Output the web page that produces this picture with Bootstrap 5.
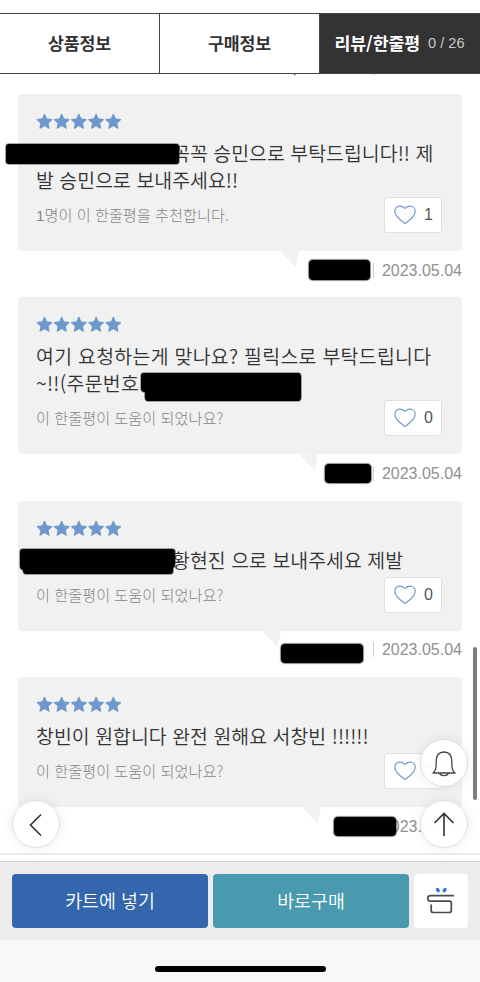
<!DOCTYPE html>
<html lang="ko">
<head>
<meta charset="utf-8">
<meta name="viewport" content="width=device-width, initial-scale=1">
<title>리뷰/한줄평</title>
<link href="https://cdn.jsdelivr.net/npm/bootstrap@5.3.0/dist/css/bootstrap.min.css" rel="stylesheet">
<style>
body{font-family:"Noto Sans CJK KR",sans-serif;color:#333;background:#fff;height:982px}
.screen{height:982px;width:480px}
.tabs{height:61px;margin-top:13px;border-top:1px solid #444;border-bottom:1px solid #444;flex:none;position:relative;z-index:2;background:#fff}
.tab-item{width:160px;font-size:17.3px;font-weight:700;letter-spacing:-.1px;border-right:1px solid #444;color:#333;text-decoration:none;line-height:24px;padding-bottom:2px}
.tab-item.on{background:#333;color:#fff;border-color:#333}
.num{font-family:"Liberation Sans",sans-serif}
.tab-count{font-size:14.6px;font-weight:400;color:#c8c8c8;margin-left:8px;letter-spacing:0;padding-top:1px}
.reviews{height:779px;padding:20px 18px 0;flex:none;overflow:hidden;background:#fff}
.bubble{background:#f1f1f1;border-radius:4px;padding:19px 18px 0;height:157px}
.bubble.short{height:130px}
.stars{display:block;margin-bottom:9px}
.msg{font-size:19.4px;font-weight:350;line-height:27px;height:54px;white-space:nowrap;letter-spacing:.05px}
.msg.wide{letter-spacing:.31px}
.short .msg{height:27px}
.gap-a{display:inline-block;width:136px}
.help{height:36px;margin-top:4px}
.help-text{font-size:15.2px;font-weight:300;color:#848484;letter-spacing:0;line-height:24px;padding-top:5px}
.like{width:58px;height:36px;background:#fff;border:1px solid #dcdfe3;border-radius:3px;padding:0 8px 0 9px;margin-right:2px;font-size:16px;color:#555}
.meta{height:46.4px;padding-bottom:8px;font-size:16px;color:#8f8f8f}
.meta .num{border-left:1px solid #d0d0d0;line-height:15px;padding-left:8px}
.tail{left:var(--x);top:100%;width:19px;height:16px;background:#f1f1f1;clip-path:polygon(0 0,100% 0,82% 100%)}
.ink{background:#000;border-radius:4px;box-shadow:0 0 1px 1px rgba(0,0,0,.45)}
.round-btn{width:48px;height:48px;border-radius:50%;background:rgba(255,255,255,.97);border:1px solid #ddd;box-shadow:0 0 12px rgba(0,0,0,.08);z-index:3;padding:0}
.sep{height:8px;border-top:2px solid #ececec;flex:none;background:#fff}
.buybar{height:79px;background:#ececec;border-top:1px solid #ccc;padding:12px;flex:none}
.buy{height:54px;width:196px;border-radius:4px;color:#fff;font-size:18.4px;font-weight:350;border:0}
.cart{background:#3366ac}
.now{background:#4a9aaf;margin-left:5px}
.gift{width:54px;height:54px;background:#fff;border-radius:4px;border:0;margin-left:5px;padding:0}
.homebar{background:#f8f8f8;flex:1;padding-top:26px}
.homebar span{width:171px;height:6px;border-radius:3px;background:#000}
.scroll-thumb{left:473px;top:647px;width:4px;height:153px;border-radius:2px;background:#7d7d7d}
</style>
<script src="https://cdn.jsdelivr.net/npm/bootstrap@5.3.0/dist/js/bootstrap.bundle.min.js"></script>
</head>
<body>
<svg class="d-none" xmlns="http://www.w3.org/2000/svg">
<symbol id="star" viewBox="0 0 17 17"><path d="M8.500 1.200l2.100 4.700 5.200.6-3.800 3.500 1 5.200-4.500-2.600L4 15.200 5 10 1.200 6.500l5.200-.6z" fill="#6e98cc" stroke="#6e98cc" stroke-width="1.100" stroke-linejoin="round"/></symbol>
<symbol id="stars5" viewBox="0 0 86 17"><use href="#star" width="17" height="17"/><use href="#star" x="17.200" width="17" height="17"/><use href="#star" x="34.400" width="17" height="17"/><use href="#star" x="51.600" width="17" height="17"/><use href="#star" x="68.800" width="17" height="17"/></symbol>
<symbol id="heart" viewBox="0 0 22 20"><path d="M11 18.500C6.500 15.200.8 11.500.8 6.200.8 3.200 3 1.200 5.700 1.200c2.500 0 4.200 1.200 5.300 2.200 1.100-1 2.800-2.200 5.300-2.200 2.700 0 4.900 2 4.900 5 0 5.300-5.700 9-10.200 12.300z" fill="none" stroke="#7298c8" stroke-width="1.200"/></symbol>
</svg>
<div class="screen d-flex flex-column overflow-hidden position-relative">
  <nav class="tabs d-flex">
    <a class="tab-item d-flex align-items-center justify-content-center">상품정보</a>
    <a class="tab-item d-flex align-items-center justify-content-center">구매정보</a>
    <a class="tab-item on d-flex align-items-center justify-content-center">리뷰/한줄평<span class="num tab-count">0 / 26</span></a>
  </nav>
  <main class="reviews">
    <article>
      <div class="bubble position-relative">
        <svg class="stars" width="86" height="17"><use href="#stars5"/></svg>
        <div class="msg"><span class="gap-a"></span>꼭꼭 승민으로 부탁드립니다!! 제<br>발 승민으로 보내주세요!!</div>
        <div class="help d-flex justify-content-between"><span class="help-text"><span class="num">1</span>명이 이 한줄평을 추천합니다.</span><button class="like d-flex align-items-center justify-content-between"><svg width="22" height="20"><use href="#heart"/></svg><span class="num">1</span></button></div>
        <i class="tail position-absolute" style="--x:262px"></i>
      </div>
      <div class="meta d-flex align-items-center justify-content-end"><span class="ink" style="width:61px;height:20px;margin-right:3px"></span><span class="num">2023.05.04</span></div>
    </article>
    <article>
      <div class="bubble position-relative">
        <svg class="stars" width="86" height="17"><use href="#stars5"/></svg>
        <div class="msg wide">여기 요청하는게 맞나요? 필릭스로 부탁드립니다<br>~!!(주문번호</div>
        <div class="help d-flex justify-content-between"><span class="help-text">이 한줄평이 도움이 되었나요?</span><button class="like d-flex align-items-center justify-content-between"><svg width="22" height="20"><use href="#heart"/></svg><span class="num">0</span></button></div>
        <i class="tail position-absolute" style="--x:281px"></i>
      </div>
      <div class="meta d-flex align-items-center justify-content-end"><span class="ink" style="width:46px;height:19px;margin-right:2px"></span><span class="num">2023.05.04</span></div>
    </article>
    <article>
      <div class="bubble short position-relative">
        <svg class="stars" width="86" height="17"><use href="#stars5"/></svg>
        <div class="msg"><span class="gap-a"></span>황현진 으로 보내주세요 제발</div>
        <div class="help d-flex justify-content-between"><span class="help-text">이 한줄평이 도움이 되었나요?</span><button class="like d-flex align-items-center justify-content-between"><svg width="22" height="20"><use href="#heart"/></svg><span class="num">0</span></button></div>
        <i class="tail position-absolute" style="--x:244px"></i>
      </div>
      <div class="meta d-flex align-items-center justify-content-end"><span class="ink mt-2" style="width:82px;height:19px;margin-right:10px"></span><span class="num">2023.05.04</span></div>
    </article>
    <article>
      <div class="bubble short position-relative">
        <svg class="stars" width="86" height="17"><use href="#stars5"/></svg>
        <div class="msg">창빈이 원합니다 완전 원해요 서창빈 !!!!!!</div>
        <div class="help d-flex justify-content-between"><span class="help-text">이 한줄평이 도움이 되었나요?</span><button class="like d-flex align-items-center justify-content-between"><svg width="22" height="20"><use href="#heart"/></svg><span class="num">0</span></button></div>
        <i class="tail position-absolute" style="--x:284px"></i>
      </div>
      <div class="meta d-flex align-items-center justify-content-end"><span class="ink position-relative" style="width:62px;height:19px;margin-right:-23px"></span><span class="num">2023.05.04</span></div>
    </article>
  </main>
  <div class="sep"></div>
  <div class="buybar d-flex">
    <button class="buy cart">카트에 넣기</button>
    <button class="buy now">바로구매</button>
    <button class="gift d-flex align-items-center justify-content-center" aria-label="선물하기"><svg width="54" height="54" viewBox="0 0 54 54" fill="none"><path d="M40 21.700H16.500a2.700 2.700 0 0 0 0 5.400h18.800a2 2 0 0 1 2 2v7.400a2 2 0 0 1-2 2H19.200a2 2 0 0 1-2-2v-6" stroke="#4b4b50" stroke-width="1.700"/><path d="M23.500 15.500l.7 1.200M31 15.500l-.7 1.200" stroke="#3379d8" stroke-width="3.400" stroke-linecap="round"/></svg></button>
  </div>
  <footer class="homebar d-flex justify-content-center"><span></span></footer>

  <svg class="position-absolute top-0 start-0 pe-none" width="480" height="840">
    <g stroke="#000" stroke-opacity=".45" stroke-width="1.500">
      <rect x="6" y="144" width="173" height="20" rx="3"/>
      <path d="M144 373h154q3 0 3 4v20q0 4-3 4H148q-3 0-3-4v-5q-4 0-4-4v-12q0-3 3-3z"/>
      <path d="M23 549h149q3 0 3 3v12q0 3-2 4v3q0 3-3 3H26q-3 0-3-4-3-1-3-4v-14q0-3 3-3z"/>
    </g>
    <path d="M294 74h2l-1.500 2z" fill="#456f9f"/><path d="M373 74h1.500" stroke="#8aa4c0"/>
  </svg>
  <div class="scroll-thumb position-absolute"></div>
  <button class="round-btn position-absolute" style="left:12px;top:800px" aria-label="뒤로"><svg class="d-block" width="46" height="46" fill="none"><path d="M28 13.500L17.500 24 28 34.500" stroke="#333" stroke-width="1.600"/></svg></button>
  <button class="round-btn position-absolute" style="left:420px;top:739px" aria-label="알림"><svg class="d-block" width="46" height="46" fill="none" stroke="#444" stroke-width="1.300"><path d="M12 33c3-2.500 3.200-5 3.200-11.500 0-6 3-9.500 7.800-9.500s7.800 3.500 7.800 9.500c0 6.500.2 9 3.200 11.500z" stroke-linejoin="round"/><path d="M18.500 33c.8 3.400 8.200 3.400 9 0"/></svg></button>
  <button class="round-btn position-absolute" style="left:420px;top:800px" aria-label="맨 위로"><svg class="d-block" width="46" height="46" fill="none" stroke="#333" stroke-width="1.600"><path d="M23 35V12.500M13.500 22L23 12.500l9.500 9.500"/></svg></button>
</div>
</body>
</html>
